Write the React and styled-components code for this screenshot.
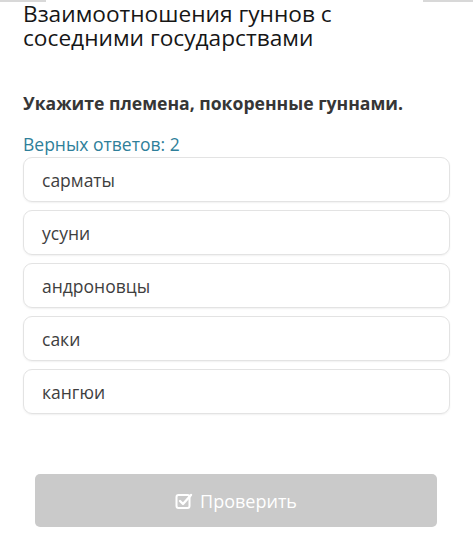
import styled, { createGlobalStyle } from "styled-components"

const GlobalStyle = createGlobalStyle`
    body {
        margin: 0;
        background: #ffffff;
        font-family: 'Open Sans', 'Noto Sans', sans-serif;
    }
`

const options = ["сарматы", "усуни", "андроновцы", "саки", "кангюи"]

export default function App() {
    return (
        <>
            <GlobalStyle />
            <SCPage>
                <SCTopEdge>
                    <span />
                    <span />
                </SCTopEdge>
                <SCTitle>Взаимоотношения гуннов с соседними государствами</SCTitle>
                <SCQuestion>Укажите племена, покоренные гуннами.</SCQuestion>
                <SCCount>Верных ответов: 2</SCCount>
                <SCOptions>
                    {options.map((o) => (
                        <SCOption key={o}>{o}</SCOption>
                    ))}
                </SCOptions>
                <SCButton disabled>
                    <svg width="18" height="18" viewBox="0 0 18 18" fill="none">
                        <rect x="1.5" y="3" width="13" height="13" rx="2" stroke="#fff" strokeWidth="2" />
                        <path d="M5 9l3 3 8-9" stroke="#fff" strokeWidth="2.4" strokeLinecap="round" strokeLinejoin="round" />
                    </svg>
                    Проверить
                </SCButton>
            </SCPage>
        </>
    )
}

const SCPage = styled.div`
    width: 473px;
    height: 548px;
    position: relative;
    overflow: hidden;
    padding: 0 23px;
    box-sizing: border-box;
`

const SCTopEdge = styled.div`
    position: absolute;
    top: 0;
    left: 0;
    right: 0;
    display: flex;
    justify-content: space-between;
    span {
        display: block;
        height: 2px;
        background: #d8d8d8;
    }
    span:first-child { width: 46px; }
    span:last-child { width: 50px; }
`

const SCTitle = styled.h1`
    margin: 0;
    padding-top: 2px;
    width: 345px;
    font-size: 22.7px;
    font-weight: 400;
    line-height: 24px;
    color: #161616;
`

const SCQuestion = styled.p`
    margin: 41px 0 0 0;
    font-size: 17.6px;
    font-weight: 700;
    line-height: 24px;
    color: #363636;
`

const SCCount = styled.p`
    margin: 18px 0 0 0;
    font-size: 17.5px;
    font-weight: 400;
    line-height: 22px;
    color: #2f7f9a;
`

const SCOptions = styled.div`
    display: flex;
    flex-direction: column;
    gap: 8px;
    margin-top: 2px;
`

const SCOption = styled.div`
    height: 45px;
    box-sizing: border-box;
    border: 1.5px solid #e3e3e3;
    border-radius: 9px;
    padding: 0 18px;
    display: flex;
    align-items: center;
    font-size: 17.5px;
    color: #3e3e3e;
    box-shadow: 0 1px 2px rgba(0, 0, 0, 0.06);
`

const SCButton = styled.button`
    margin: 60px 0 0 12px;
    width: 402px;
    height: 53px;
    border: none;
    border-radius: 5px;
    background: #cacaca;
    color: #ffffff;
    font-family: 'Open Sans', 'Noto Sans', sans-serif;
    font-size: 18px;
    display: flex;
    align-items: center;
    justify-content: center;
    gap: 7px;
`
